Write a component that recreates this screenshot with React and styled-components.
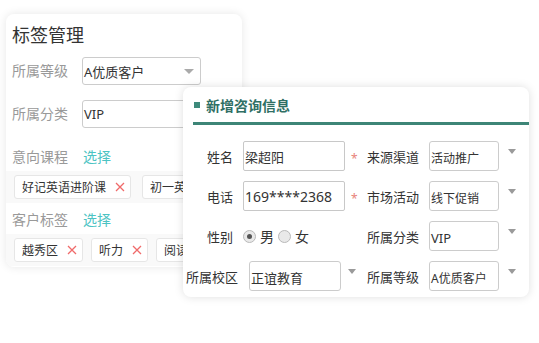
import React from 'react';
import styled, { createGlobalStyle } from 'styled-components';

const GlobalStyle = createGlobalStyle`
  body {
    margin: 0;
    background: #fff;
    font-family: "Noto Sans", "Noto Sans CJK SC", sans-serif;
  }
`;

const Canvas = styled.div`
  position: relative;
  width: 539px;
  height: 343px;
  overflow: hidden;
  padding: 14px 0 0 6px;
  box-sizing: border-box;
`;

/* back card: 标签管理 */
const BackCard = styled.div`
  width: 236px;
  height: 253px;
  background: #fff;
  border-radius: 8px;
  box-shadow: 0 0 10px rgba(0, 0, 0, 0.1);
  padding: 8px 0 0 6px;
  box-sizing: border-box;
  overflow: hidden;
`;

const Title = styled.div`
  font-size: 18px;
  line-height: 26px;
  color: #333;
`;

const FieldRow = styled.div`
  display: flex;
  align-items: center;
  height: ${(p) => p.$h || 28}px;
  margin-top: ${(p) => p.$mt || 0}px;
`;

const BackLabel = styled.span`
  width: 70px;
  flex: none;
  font-size: 14px;
  line-height: 20px;
  color: #999;
`;

const BackSelect = styled.div`
  position: relative;
  width: 119px;
  height: 28px;
  border: 1px solid #ccc;
  border-radius: 3px;
  box-sizing: border-box;
  padding-left: 1px;
  display: flex;
  align-items: center;
  font-size: 13px;
  color: #333;
`;

const InnerCaret = styled.span`
  position: absolute;
  right: 6px;
  top: 11px;
  border-left: 5px solid transparent;
  border-right: 5px solid transparent;
  border-top: 5px solid #aaa;
`;

const Pick = styled.span`
  margin-left: 1px;
  font-size: 14px;
  line-height: 20px;
  color: #4cc3c3;
`;

const TagBand = styled.div`
  display: flex;
  gap: ${(p) => p.$gap || 9}px;
  margin: 4px 0 0 -6px;
  padding: 4px 8px;
  background: #f9f9f9;
  white-space: nowrap;
`;

const Tag = styled.div`
  flex: none;
  display: flex;
  align-items: center;
  height: 22px;
  padding: 0 5px 0 7px;
  border: 1px solid #e6e6e6;
  border-radius: 3px;
  background: #fff;
  font-size: 12px;
  color: #333;
`;

const Close = styled.svg`
  width: 10px;
  height: 10px;
  margin-left: 9px;
`;

const CloseIcon = () => (
  <Close viewBox="0 0 10 10">
    <path d="M1 1 L9 9 M9 1 L1 9" stroke="#f06a6a" strokeWidth="1.3" fill="none" />
  </Close>
);

/* front card: 新增咨询信息 */
const FrontCard = styled.div`
  position: absolute;
  left: 183px;
  top: 87px;
  width: 346px;
  height: 210px;
  background: #fff;
  border-radius: 8px;
  box-shadow: 0 0 10px rgba(0, 0, 0, 0.13);
`;

const Header = styled.div`
  display: flex;
  align-items: center;
  gap: 6px;
  height: 35px;
  margin-left: 10px;
  padding-left: 1px;
  border-bottom: 3px solid #3d8577;
`;

const Square = styled.span`
  width: 6px;
  height: 6px;
  background: #3d8a7b;
`;

const HeaderTitle = styled.span`
  font-size: 14px;
  font-weight: bold;
  color: #2f6f64;
`;

const FormBody = styled.div`
  display: flex;
  flex-direction: column;
  gap: 10px;
  padding-top: 16px;
`;

const FormRow = styled.div`
  display: flex;
  align-items: center;
  height: 30px;
`;

const LeftField = styled.div`
  width: 184px;
  flex: none;
  display: flex;
  align-items: center;
`;

const RightField = styled.div`
  display: flex;
  align-items: center;
`;

const FormLabel = styled.span`
  width: ${(p) => (p.$w ? `${p.$w}px` : 'auto')};
  margin-right: ${(p) => p.$mr || 10}px;
  text-align: right;
  font-size: 13px;
  color: #333;
  white-space: nowrap;
`;

const TextInput = styled.div`
  width: 102px;
  height: 30px;
  border: 1px solid #c8c8c8;
  border-radius: 2px;
  box-sizing: border-box;
  padding-left: 1px;
  display: flex;
  align-items: center;
  font-size: ${(p) => p.$fs || 14}px;
  color: #333;
`;

const Required = styled.span`
  margin-left: 6px;
  font-size: 12px;
  color: #e8837a;
  position: relative;
  top: 2px;
`;

const SelectBox = styled.div`
  width: ${(p) => p.$w}px;
  height: 30px;
  border: 1px solid #ccc;
  border-radius: 3px;
  box-sizing: border-box;
  padding: 3px 0 0 1px;
  display: flex;
  align-items: center;
  font-size: ${(p) => p.$fs || 12}px;
  color: #333;
  white-space: nowrap;
`;

const Caret = styled.span`
  align-self: flex-start;
  margin-top: 8px;
  margin-left: ${(p) => p.$ml || 9}px;
  border-left: 4.5px solid transparent;
  border-right: 4.5px solid transparent;
  border-top: 5px solid #9a9a9a;
`;

const RadioGroup = styled.div`
  display: flex;
  align-items: center;
  gap: 4px;
  font-size: 14px;
  color: #333;
`;

const Radio = styled.span`
  position: relative;
  width: 13px;
  height: 13px;
  border: 1px solid #b9b9b9;
  border-radius: 50%;
  background: #e9e9e9;
  box-sizing: border-box;
  &::after {
    content: '';
    display: ${(p) => (p.$checked ? 'block' : 'none')};
    position: absolute;
    left: 3px;
    top: 3px;
    width: 5px;
    height: 5px;
    border-radius: 50%;
    background: #555;
  }
`;

export default function App() {
  return (
    <>
      <GlobalStyle />
      <Canvas>
        <BackCard>
          <Title>标签管理</Title>
          <FieldRow $mt={9}>
            <BackLabel>所属等级</BackLabel>
            <BackSelect>
              A优质客户
              <InnerCaret />
            </BackSelect>
          </FieldRow>
          <FieldRow $mt={15}>
            <BackLabel>所属分类</BackLabel>
            <BackSelect>VIP</BackSelect>
          </FieldRow>
          <FieldRow $mt={19} $h={20}>
            <BackLabel>意向课程</BackLabel>
            <Pick>选择</Pick>
          </FieldRow>
          <TagBand $gap={11}>
            <Tag>
              好记英语进阶课
              <CloseIcon />
            </Tag>
            <Tag>初一英语</Tag>
          </TagBand>
          <FieldRow $mt={7} $h={20}>
            <BackLabel>客户标签</BackLabel>
            <Pick>选择</Pick>
          </FieldRow>
          <TagBand $gap={8}>
            <Tag>
              越秀区
              <CloseIcon />
            </Tag>
            <Tag>
              听力
              <CloseIcon />
            </Tag>
            <Tag>阅读</Tag>
          </TagBand>
        </BackCard>

        <FrontCard>
          <Header>
            <Square />
            <HeaderTitle>新增咨询信息</HeaderTitle>
          </Header>
          <FormBody>
            <FormRow>
              <LeftField>
                <FormLabel $w={50}>姓名</FormLabel>
                <TextInput $fs={13}>梁超阳</TextInput>
                <Required>*</Required>
              </LeftField>
              <RightField>
                <FormLabel>来源渠道</FormLabel>
                <SelectBox $w={70}>活动推广</SelectBox>
                <Caret />
              </RightField>
            </FormRow>
            <FormRow>
              <LeftField>
                <FormLabel $w={50}>电话</FormLabel>
                <TextInput>169****2368</TextInput>
                <Required>*</Required>
              </LeftField>
              <RightField>
                <FormLabel>市场活动</FormLabel>
                <SelectBox $w={70}>线下促销</SelectBox>
                <Caret />
              </RightField>
            </FormRow>
            <FormRow>
              <LeftField>
                <FormLabel $w={50}>性别</FormLabel>
                <RadioGroup>
                  <Radio $checked />
                  <span>男</span>
                  <Radio />
                  <span>女</span>
                </RadioGroup>
              </LeftField>
              <RightField>
                <FormLabel>所属分类</FormLabel>
                <SelectBox $w={70} $fs={13}>VIP</SelectBox>
                <Caret />
              </RightField>
            </FormRow>
            <FormRow>
              <LeftField>
                <FormLabel $w={55} $mr={11}>所属校区</FormLabel>
                <SelectBox $w={92} $fs={13}>正谊教育</SelectBox>
                <Caret $ml={7} />
              </LeftField>
              <RightField>
                <FormLabel>所属等级</FormLabel>
                <SelectBox $w={70}>A优质客户</SelectBox>
                <Caret />
              </RightField>
            </FormRow>
          </FormBody>
        </FrontCard>
      </Canvas>
    </>
  );
}
